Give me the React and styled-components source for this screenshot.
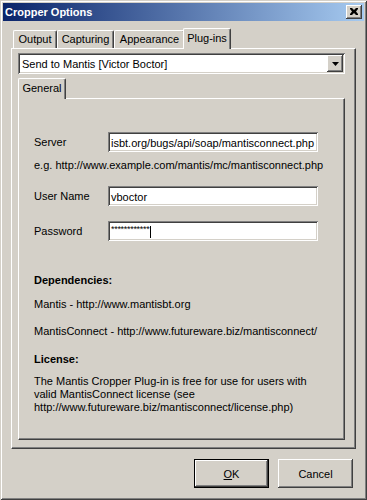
import React from "react";
import styled, { createGlobalStyle } from "styled-components";

const FACE = "#d4d0c8";

const GlobalStyle = createGlobalStyle`
  html, body { margin: 0; padding: 0; background: ${FACE}; }
  body {
    font-family: "Liberation Sans", Arial, sans-serif;
    font-size: 11px;
    color: #000;
  }
  * { box-sizing: border-box; }
`;

const Window = styled.div`
  width: 367px;
  height: 500px;
  background: ${FACE};
  padding: 3px;
  display: flex;
  flex-direction: column;
  box-shadow: inset 1px 1px 0 ${FACE}, inset -1px -1px 0 #404040,
    inset 2px 2px 0 #fff, inset -2px -2px 0 #808080;
`;

const TitleBar = styled.div`
  height: 18px;
  display: flex;
  align-items: center;
  justify-content: space-between;
  padding: 0 2px 0 2px;
  background: linear-gradient(to right, #0a246a, #a6caf0);
`;

const Title = styled.span`
  color: #fff;
  font-weight: bold;
  font-size: 11px;
`;

const Bevel = `
  background: ${FACE};
  box-shadow: inset -1px -1px 0 #404040, inset 1px 1px 0 #fff,
    inset -2px -2px 0 #808080, inset 2px 2px 0 ${FACE};
`;

const CloseButton = styled.div`
  width: 16px;
  height: 14px;
  ${Bevel}
  display: flex;
  align-items: center;
  justify-content: center;
  padding-bottom: 1px;
`;

const Body = styled.div`
  flex: 1;
  display: flex;
  flex-direction: column;
  padding: 7px 8px 0 8px;
`;

const TabStrip = styled.div`
  display: flex;
  align-items: flex-end;
  height: 20px;
  margin-top: ${(p) => p.$mt || 0}px;
  padding-left: ${(p) => p.$indent}px;
`;

const Tab = styled.div`
  width: ${(p) => p.$w}px;
  height: ${(p) => (p.$active ? 21 : 18)}px;
  margin: ${(p) => (p.$active ? "0 -2px -1px -2px" : "0")};
  position: relative;
  z-index: ${(p) => (p.$active ? 2 : 1)};
  background: ${FACE};
  border-top: 1px solid #fff;
  border-left: 1px solid #fff;
  border-right: 1px solid #404040;
  border-top-left-radius: 2px;
  border-top-right-radius: 2px;
  box-shadow: inset -1px 0 0 #808080;
  display: flex;
  justify-content: center;
  padding-top: ${(p) => (p.$active ? 3 : 2)}px;
  font-size: 11px;
  white-space: nowrap;
`;

const Panel = styled.div`
  width: ${(p) => p.$w}px;
  height: ${(p) => p.$h}px;
  background: ${FACE};
  border-top: 1px solid #fff;
  border-left: 1px solid #fff;
  border-right: 1px solid #404040;
  border-bottom: 1px solid #404040;
  box-shadow: inset -1px -1px 0 #808080;
  display: flex;
  flex-direction: column;
  padding: ${(p) => p.$pad};
`;

const Combo = styled.div`
  width: 327px;
  height: 21px;
  background: #fff;
  box-shadow: inset 1px 1px 0 #808080, inset -1px -1px 0 #fff,
    inset 2px 2px 0 #404040, inset -2px -2px 0 ${FACE};
  display: flex;
  align-items: center;
  justify-content: space-between;
  padding: 2px 2px 2px 4px;
`;

const DropButton = styled.div`
  width: 16px;
  height: 17px;
  ${Bevel}
  display: flex;
  align-items: center;
  justify-content: center;
`;

const Form = styled.div`
  display: grid;
  grid-template-columns: 74px 210px;
  align-items: center;
`;

const Label = styled.div`
  line-height: 13px;
  margin-top: ${(p) => p.$mt || 0}px;
  grid-column: 1;
`;

const Field = styled.div`
  grid-column: 2;
  height: 20px;
  margin-top: ${(p) => p.$mt || 0}px;
  background: #fff;
  box-shadow: inset 1px 1px 0 #808080, inset -1px -1px 0 #fff,
    inset 2px 2px 0 #404040, inset -2px -2px 0 ${FACE};
  display: flex;
  align-items: center;
  padding: 2px 3px 0 3px;
  white-space: nowrap;
  overflow: hidden;
`;

const Hint = styled.div`
  grid-column: 1 / span 2;
  line-height: 13px;
  margin-top: 7px;
  white-space: nowrap;
`;

const Mask = styled.span`
  font-size: 9px;
  letter-spacing: -0.3px;
  align-self: flex-start;
  margin-top: 1px;
`;

const Caret = styled.span`
  display: inline-block;
  width: 1px;
  height: 12px;
  background: #000;
  margin-left: 1px;
`;

const Text = styled.div`
  line-height: 13px;
  margin-top: ${(p) => p.$mt || 0}px;
  font-weight: ${(p) => (p.$bold ? "bold" : "normal")};
  white-space: nowrap;
`;

const Footer = styled.div`
  display: flex;
  justify-content: flex-end;
  gap: 9px;
  padding: 10px 3px 0 0;
`;

const Button = styled.div`
  width: 75px;
  height: 29px;
  ${Bevel}
  display: flex;
  align-items: center;
  justify-content: center;
  ${(p) =>
    p.$default
      ? `box-shadow: inset 0 0 0 1px #000, inset -2px -2px 0 #404040, inset 2px 2px 0 #fff, inset -3px -3px 0 #808080;`
      : ""}
`;

const U = styled.span`
  text-decoration: underline;
`;

export default function App() {
  return (
    <>
      <GlobalStyle />
      <Window>
        <TitleBar>
          <Title>Cropper Options</Title>
          <CloseButton>
            <svg width="8" height="7" viewBox="0 0 8 7">
              <path
                d="M0 0h2l2 2 2-2h2v1L6 3.5 8 6v1H6L4 5 2 7H0V6l2-2.5L0 1z"
                fill="#000"
              />
            </svg>
          </CloseButton>
        </TitleBar>
        <Body>
          <TabStrip $indent={2}>
            <Tab $w={44}>Output</Tab>
            <Tab $w={57}>Capturing</Tab>
            <Tab $w={71}>Appearance</Tab>
            <Tab $w={48} $active>
              Plug-ins
            </Tab>
          </TabStrip>
          <Panel $w={345} $h={401} $pad="4px 0 0 6px">
            <Combo>
              <span>Send to Mantis [Victor Boctor]</span>
              <DropButton>
                <svg width="7" height="4" viewBox="0 0 7 4">
                  <path d="M0 0h7L3.5 4z" fill="#000" />
                </svg>
              </DropButton>
            </Combo>
            <TabStrip $indent={2} $mt={4}>
              <Tab $w={48} $active>
                General
              </Tab>
            </TabStrip>
            <Panel $w={327} $h={342} $pad="33px 0 0 15px">
              <Form>
                <Label>Server</Label>
                <Field>isbt.org/bugs/api/soap/mantisconnect.php</Field>
                <Hint>e.g. http://www.example.com/mantis/mc/mantisconnect.php</Hint>
                <Label $mt={14}>User Name</Label>
                <Field $mt={14}>vboctor</Field>
                <Label $mt={15}>Password</Label>
                <Field $mt={15}>
                  <Mask>************</Mask>
                  <Caret />
                </Field>
              </Form>
              <Text $bold $mt={33}>
                Dependencies:
              </Text>
              <Text $mt={11}>Mantis - http://www.mantisbt.org</Text>
              <Text $mt={14}>
                MantisConnect - http://www.futureware.biz/mantisconnect/
              </Text>
              <Text $bold $mt={15}>
                License:
              </Text>
              <Text $mt={9}>
                The Mantis Cropper Plug-in is free for use for users with
                <br />
                valid MantisConnect license (see
                <br />
                http://www.futureware.biz/mantisconnect/license.php)
              </Text>
            </Panel>
          </Panel>
          <Footer>
            <Button $default>
              <U>O</U>K
            </Button>
            <Button>Cancel</Button>
          </Footer>
        </Body>
      </Window>
    </>
  );
}
